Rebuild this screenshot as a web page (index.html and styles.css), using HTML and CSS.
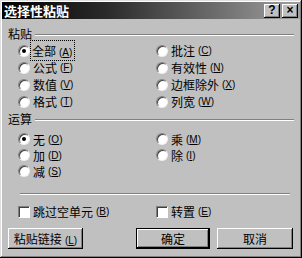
FILE: index.html
```html
<!DOCTYPE html>
<html lang="zh-CN">
<head>
    <meta charset="UTF-8">
    <title>选择性粘贴</title>
    <link rel="stylesheet" href="styles.css">
</head>
<body>
    <div class="dialog">
        <div class="titlebar">
            <span class="title">选择性粘贴</span>
            <div class="title-buttons">
                <span class="tbtn">?</span>
                <span class="tbtn">×</span>
            </div>
        </div>

        <div class="content">
            <div class="group-head">
                <span>粘贴</span>
                <div class="etch"></div>
            </div>
            <div class="options paste-opts">
                <label class="opt"><span class="radio on"></span><span class="focus">全部<span class="key">(<u>A</u>)</span></span></label>
                <label class="opt"><span class="radio"></span>批注<span class="key">(<u>C</u>)</span></label>
                <label class="opt"><span class="radio"></span>公式<span class="key">(<u>F</u>)</span></label>
                <label class="opt"><span class="radio"></span>有效性<span class="key">(<u>N</u>)</span></label>
                <label class="opt"><span class="radio"></span>数值<span class="key">(<u>V</u>)</span></label>
                <label class="opt"><span class="radio"></span>边框除外<span class="key">(<u>X</u>)</span></label>
                <label class="opt"><span class="radio"></span>格式<span class="key">(<u>T</u>)</span></label>
                <label class="opt"><span class="radio"></span>列宽<span class="key">(<u>W</u>)</span></label>
            </div>

            <div class="group-head op-head">
                <span>运算</span>
                <div class="etch"></div>
            </div>
            <div class="options op-opts">
                <label class="opt"><span class="radio on"></span>无<span class="key">(<u>O</u>)</span></label>
                <label class="opt"><span class="radio"></span>乘<span class="key">(<u>M</u>)</span></label>
                <label class="opt"><span class="radio"></span>加<span class="key">(<u>D</u>)</span></label>
                <label class="opt"><span class="radio"></span>除<span class="key">(<u>I</u>)</span></label>
                <label class="opt"><span class="radio"></span>减<span class="key">(<u>S</u>)</span></label>
            </div>

            <div class="etch sep"></div>

            <div class="checks">
                <label class="opt"><span class="check"></span>跳过空单元<span class="key">(<u>B</u>)</span></label>
                <label class="opt"><span class="check"></span>转置<span class="key">(<u>E</u>)</span></label>
            </div>

            <div class="buttons">
                <button class="btn link-btn">粘贴链接<span class="key">(<u>L</u>)</span></button>
                <div class="right-btns">
                    <button class="btn default">确定</button>
                    <button class="btn cancel">取消</button>
                </div>
            </div>
        </div>
    </div>
</body>
</html>
```

FILE: styles.css
```css
* {
    margin: 0;
    padding: 0;
    box-sizing: border-box;
}

body {
    background-color: #c0c0c0;
    font-family: "Noto Sans CJK SC", "Liberation Sans", sans-serif;
    font-size: 12px;
    color: #000;
}

.dialog {
    width: 302px;
    height: 258px;
    background-color: #c0c0c0;
    padding: 2px;
    box-shadow: inset -1px -1px 0 #000, inset 1px 1px 0 #dfdfdf,
                inset -2px -2px 0 #808080, inset 2px 2px 0 #fff;
}

.titlebar {
    height: 17px;
    display: flex;
    align-items: center;
    justify-content: space-between;
    padding: 0 2px 0 2px;
    background: linear-gradient(to right, #000 0%, #2a2a2a 35%, #a0a0a0 100%);
}

.title {
    color: #fff;
    font-size: 13px;
    line-height: 17px;
    font-weight: bold;
}

.title-buttons {
    display: flex;
    gap: 2px;
}

.tbtn {
    width: 16px;
    height: 14px;
    background-color: #c0c0c0;
    font-family: "Liberation Sans", sans-serif;
    font-weight: bold;
    font-size: 12px;
    line-height: 13px;
    text-align: center;
    box-shadow: inset -1px -1px 0 #000, inset 1px 1px 0 #fff, inset -2px -2px 0 #808080;
}

.content {
    padding: 0 6px;
}

.group-head {
    display: flex;
    align-items: center;
    gap: 3px;
    height: 14px;
    margin-top: 8px;
    line-height: 14px;
}

.group-head .etch {
    flex: 1;
    margin-top: 1px;
}

.etch {
    height: 2px;
    border-top: 1px solid #808080;
    border-bottom: 1px solid #fff;
}

.op-head {
    margin-top: 2px;
}

.options {
    display: grid;
    grid-template-columns: 138px 1fr;
    padding-left: 10px;
    margin-top: 1px;
}

.paste-opts {
    grid-auto-rows: 17px;
}

.op-opts {
    grid-auto-rows: 16px;
    margin-top: 5px;
}

.opt {
    display: flex;
    align-items: center;
    white-space: nowrap;
}

.radio {
    width: 12px;
    height: 12px;
    border-radius: 50%;
    background-color: #fff;
    border: 1px solid;
    border-color: #808080 #f0f0f0 #f0f0f0 #808080;
    box-shadow: inset 1px 1px 0 #404040;
    margin-right: 3px;
    display: flex;
    align-items: center;
    justify-content: center;
}

.radio.on::after {
    content: '';
    width: 4px;
    height: 4px;
    border-radius: 50%;
    background-color: #000;
}

.key {
    font-family: "Liberation Sans", sans-serif;
    font-size: 10px;
    margin-left: 3px;
}

.focus {
    outline: 1px dotted #000;
    outline-offset: 1px;
    padding: 0 1px 0 0;
    margin-left: -1px;
}

.sep {
    margin: 14px 4px 0 12px;
}

.checks {
    display: grid;
    grid-template-columns: 138px 1fr;
    padding-left: 10px;
    height: 14px;
    margin-top: 8px;
}

.check {
    width: 12px;
    height: 12px;
    background-color: #fff;
    border: 1px solid;
    border-color: #808080 #fff #fff #808080;
    box-shadow: inset 1px 1px 0 #404040;
    margin-right: 3px;
}

.buttons {
    display: flex;
    justify-content: space-between;
    margin-top: 11px;
    padding-right: 1px;
}

.right-btns {
    display: flex;
    gap: 7px;
}

.btn {
    height: 21px;
    background-color: #c0c0c0;
    border: none;
    font-family: inherit;
    font-size: 12px;
    color: #000;
    box-shadow: inset -1px -1px 0 #000, inset 1px 1px 0 #fff, inset -2px -2px 0 #808080;
}

.link-btn {
    width: 75px;
}

.default {
    width: 74px;
    border: 1px solid #000;
}

.cancel {
    width: 76px;
}
```
